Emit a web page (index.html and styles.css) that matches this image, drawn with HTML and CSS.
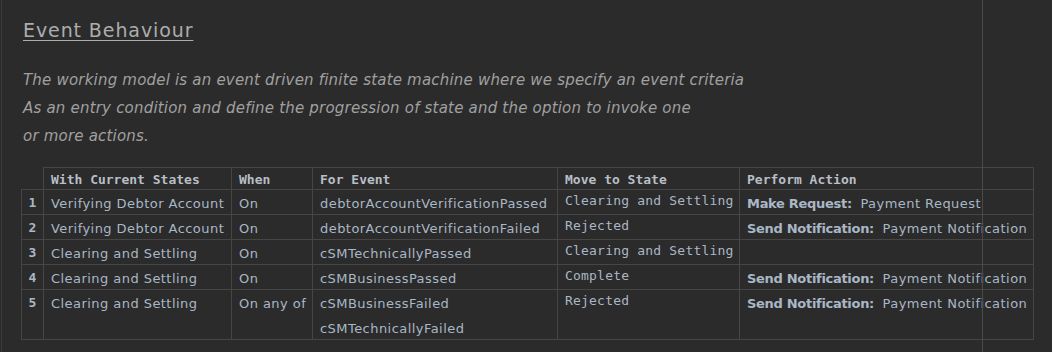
FILE: index.html
```html
<!DOCTYPE html>
<html lang="en">
<head>
    <meta charset="UTF-8">
    <title>Event Behaviour</title>
    <link rel="stylesheet" href="styles.css">
</head>
<body>
    <div class="page">
        <h2 class="title">Event Behaviour</h2>
        <p class="intro">
            The working model is an event driven finite state machine where we specify an event criteria<br>
            As an entry condition and define the progression of state and the option to invoke one<br>
            or more actions.
        </p>

        <table class="events">
            <colgroup>
                <col class="c-num">
                <col class="c-state">
                <col class="c-when">
                <col class="c-event">
                <col class="c-move">
                <col class="c-action">
            </colgroup>
            <thead>
                <tr>
                    <th class="blank"></th>
                    <th>With Current States</th>
                    <th>When</th>
                    <th>For Event</th>
                    <th>Move to State</th>
                    <th>Perform Action</th>
                </tr>
            </thead>
            <tbody>
                <tr>
                    <td class="num">1</td>
                    <td>Verifying Debtor Account</td>
                    <td>On</td>
                    <td>debtorAccountVerificationPassed</td>
                    <td class="mono">Clearing and Settling</td>
                    <td><b>Make Request:</b> Payment Request</td>
                </tr>
                <tr>
                    <td class="num">2</td>
                    <td>Verifying Debtor Account</td>
                    <td>On</td>
                    <td>debtorAccountVerificationFailed</td>
                    <td class="mono">Rejected</td>
                    <td><b>Send Notification:</b> Payment Notification</td>
                </tr>
                <tr>
                    <td class="num">3</td>
                    <td>Clearing and Settling</td>
                    <td>On</td>
                    <td>cSMTechnicallyPassed</td>
                    <td class="mono">Clearing and Settling</td>
                    <td></td>
                </tr>
                <tr>
                    <td class="num">4</td>
                    <td>Clearing and Settling</td>
                    <td>On</td>
                    <td>cSMBusinessPassed</td>
                    <td class="mono">Complete</td>
                    <td><b>Send Notification:</b> Payment Notification</td>
                </tr>
                <tr>
                    <td class="num">5</td>
                    <td>Clearing and Settling</td>
                    <td>On any of</td>
                    <td>
                        <div>cSMBusinessFailed</div>
                        <div class="next-line">cSMTechnicallyFailed</div>
                    </td>
                    <td class="mono">Rejected</td>
                    <td><b>Send Notification:</b> Payment Notification</td>
                </tr>
            </tbody>
        </table>
    </div>
    <div class="margin-guide"></div>
</body>
</html>
```

FILE: styles.css
```css
body {
    margin: 0;
    background-color: #2b2b2b;
    font-family: "DejaVu Sans", sans-serif;
    color: #a9b7c6;
}
.page {
    margin-left: 1px;
    border-left: 1px solid #3c3c3c;
    padding: 17px 0 10px 19px;
    min-height: 325px;
}
.title {
    margin: 0 0 0 2px;
    font-size: 19px;
    font-weight: 400;
    letter-spacing: 0.9px;
    line-height: 26px;
    color: #adadad;
    text-decoration: underline;
    text-underline-offset: 3px;
}
.intro {
    margin: 23px 0 17px 2px;
    font-style: italic;
    font-size: 15px;
    letter-spacing: 0.2px;
    line-height: 28px;
    color: #a0a0a0;
}
.events {
    border-collapse: collapse;
    table-layout: fixed;
    width: 1012px;
    font-size: 13px;
    letter-spacing: 0.45px;
}
.c-num { width: 22px; }
.c-state { width: 188px; }
.c-when { width: 81px; }
.c-event { width: 245px; }
.c-move { width: 182px; }
.c-action { width: 294px; }
.events th,
.events td {
    border: 1px solid #464646;
    padding: 0 7px;
    text-align: left;
    vertical-align: top;
    white-space: nowrap;
    overflow: hidden;
}
.events th {
    font-family: "DejaVu Sans Mono", monospace;
    font-weight: bold;
    font-size: 13px;
    letter-spacing: 0;
    line-height: 18px;
    padding-top: 3px;
    color: #b8bec6;
}
.events th.blank {
    border-top: none;
    border-left: none;
}
.events td {
    line-height: 20px;
    padding-top: 4px;
    padding-bottom: 0;
}
.events td .next-line {
    margin-top: 5px;
}
.events td.num {
    padding: 1px 0 0;
    text-align: center;
    font-family: "DejaVu Sans Mono", monospace;
    font-weight: bold;
    letter-spacing: 0;
    line-height: 23px;
}
.events td.mono {
    font-family: "DejaVu Sans Mono", monospace;
    letter-spacing: 0.2px;
    line-height: 18px;
    padding-top: 2px;
}
.events b {
    font-weight: bold;
    letter-spacing: -0.3px;
    margin-right: 4px;
}
.margin-guide {
    position: absolute;
    top: 0;
    bottom: 0;
    left: 982px;
    width: 1px;
    background-color: #4a4a4a;
}
```
